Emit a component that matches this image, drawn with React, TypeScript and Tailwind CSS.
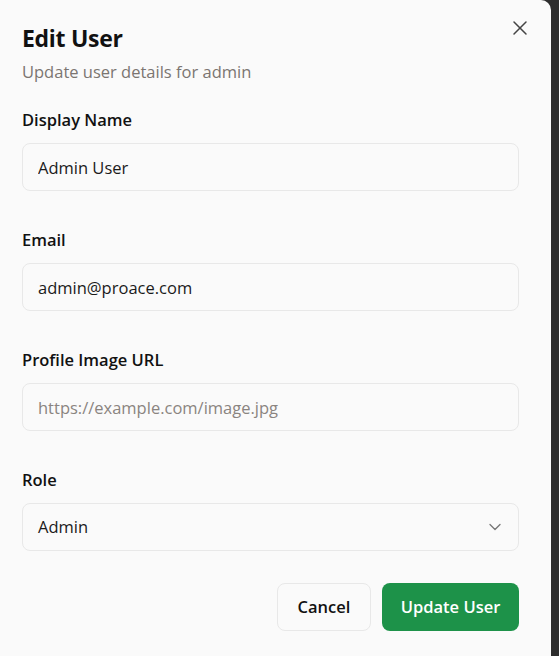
import React from 'react';
import { X, ChevronDown } from 'lucide-react';

const fields = [
  { label: 'Display Name', value: 'Admin User', placeholder: '' },
  { label: 'Email', value: 'admin@proace.com', placeholder: '' },
  { label: 'Profile Image URL', value: '', placeholder: 'https://example.com/image.jpg' },
];

export default function App() {
  return (
    <div
      className="min-h-screen w-full bg-[#2d2d2d] flex"
      style={{ fontFamily: '"Open Sans", "Noto Sans", sans-serif' }}
    >
      <div className="relative w-[551px] min-h-screen bg-[#fafafa] rounded-tr-[10px] pl-[22px] pr-[32px] pt-[24px]">
        <button className="absolute top-[16px] right-[19px] text-[#444]">
          <X size={24} strokeWidth={1.5} />
        </button>

        <h2 className="text-[23px] leading-[28px] font-bold text-[#111] tracking-[-0.3px]">
          Edit User
        </h2>
        <p className="mt-2 text-[16.5px] leading-6 text-[#7b7571]">Update user details for admin</p>

        <div className="mt-6 flex flex-col gap-[37px]">
          {fields.map((f) => (
            <div key={f.label}>
              <label className="block text-[16.5px] leading-6 font-semibold text-[#111] mb-[11px]">{f.label}</label>
              <input
                readOnly
                value={f.value}
                placeholder={f.placeholder}
                className="w-full h-12 rounded-lg border border-[#e8e8e8] bg-[#fafafa] pl-[15px] pr-4 text-[16.5px] text-[#1a1a1a] placeholder:text-[#8a8480] outline-none"
              />
            </div>
          ))}
          <div>
            <label className="block text-[16.5px] leading-6 font-semibold text-[#111] mb-[11px]">Role</label>
            <div className="w-full h-12 rounded-lg border border-[#e8e8e8] bg-[#fafafa] pl-[15px] pr-[13px] flex items-center justify-between text-[16.5px] text-[#1a1a1a]">
              <span>Admin</span>
              <ChevronDown size={20} strokeWidth={1.6} className="text-[#777]" />
            </div>
          </div>
        </div>

        <div className="mt-8 flex justify-end gap-[11px]">
          <button className="h-12 w-[94px] rounded-lg border border-[#e8e8e8] bg-[#fafafa] text-[16.5px] font-semibold text-[#111]">
            Cancel
          </button>
          <button className="h-12 w-[137px] rounded-lg bg-[#1d9249] text-[16.5px] font-semibold text-white">
            Update User
          </button>
        </div>
      </div>
    </div>
  );
}
